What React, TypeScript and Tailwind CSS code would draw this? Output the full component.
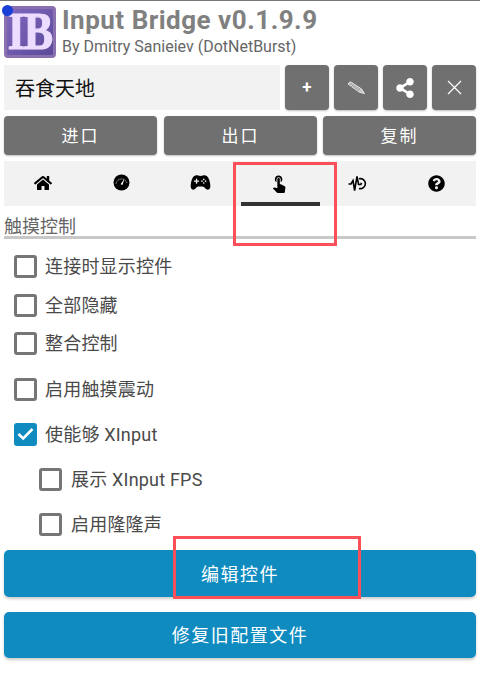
import { FaHome, FaQuestionCircle, FaShareAlt } from "react-icons/fa";
import { IoGameController } from "react-icons/io5";
import { MdTouchApp } from "react-icons/md";

const Gauge = () => (
  <svg width="17" height="17" viewBox="0 0 17 17">
    <circle cx="8.5" cy="8.5" r="8" fill="#000" />
    <path d="M3 9.5a5.6 5.6 0 0 1 11 0" fill="none" stroke="#fff" strokeWidth="1" strokeDasharray="1 1.2" />
    <path d="M7.6 10.2 11.6 4.6 9.4 11z" fill="#fff" />
  </svg>
);

const Pulse = () => (
  <svg width="19" height="19" viewBox="0 0 19 19" fill="none" stroke="#000" strokeWidth="1.6">
    <path d="M0.5 10h2.5l2-3.5 1.6 10 2.4-14 1.6 8h3" />
    <path d="M11 4.8a5 5 0 1 1 0 9.6" />
    <path d="M12.4 8.4l2.2 1.2-2.2 1.2z" fill="#000" stroke="none" />
  </svg>
);

const Pencil = () => (
  <svg width="18" height="13" viewBox="0 0 18 13" fill="#c4c4c4" stroke="#e6e6e6" strokeWidth="1">
    <path d="M1 3 3.4 0.8 14.6 8 17.5 12.6 12.4 11.2z" />
    <path d="M2.4 4.2 4.8 2M4.4 5.6l2.4-2.2M6.4 7l2.4-2.2M8.4 8.4l2.4-2.2M10.4 9.8l2.4-2.2" fill="none" stroke="#8f8f8f" />
  </svg>
);

function Logo() {
  return (
    <div className="ml-1 flex h-[52px] w-[52px] shrink-0 items-center justify-center rounded-[4px] border-[3px] border-[#8a70ae] bg-gradient-to-br from-[#8069c0] to-[#5d4a9a]">
      <span className="scale-y-[1.2] text-[44px] leading-[46px] font-bold tracking-[-1px] text-[#ecdcff] [-webkit-text-stroke:1px_#ecdcff] font-['Liberation_Serif',serif]">
        IB
      </span>
    </div>
  );
}

function GrayButton({ children, className }: { children: React.ReactNode; className: string }) {
  return (
    <button className={`flex items-center justify-center rounded-[4px] bg-[#707070] text-white shadow-[0_1px_2px_rgba(0,0,0,0.25)] ${className}`}>
      {children}
    </button>
  );
}

function Check({ label, checked, nested, className }: { label: string; checked?: boolean; nested?: boolean; className?: string }) {
  return (
    <label className={`flex h-[24px] items-center ${nested ? "gap-[9px] pl-[39px]" : "gap-[8px] pl-[14px]"} ${className ?? ""}`}>
      {checked ? (
        <span className="flex h-[23px] w-[23px] items-center justify-center rounded-[3px] bg-[#0f8bbf]">
          <svg width="17" height="14" viewBox="0 0 17 14" fill="none" stroke="#fff" strokeWidth="2.6">
            <path d="M1.5 7 6.2 11.5 15.5 2" />
          </svg>
        </span>
      ) : (
        <span className="h-[23px] w-[23px] rounded-[3px] border-[3px] border-[#767676] bg-white" />
      )}
      <span className="pt-[1px] text-[18px] leading-6 tracking-[0.2px] text-[#4a4a4a]">{label}</span>
    </label>
  );
}

export default function App() {
  return (
    <div className="relative h-[686px] w-[480px] overflow-hidden border-t border-[#777] bg-white font-['Roboto','Noto_Sans_CJK_SC',sans-serif]">
      {/* header */}
      <div className="flex h-[64px] items-start pt-[5px]">
        <Logo />
        <div className="ml-[6px]">
          <div className="text-[26px] leading-[28px] font-bold tracking-[0.5px] text-[#808080]">Input Bridge v0.1.9.9</div>
          <div className="mt-[3px] text-[16px] leading-[19px] text-[#666]">By Dmitry Sanieiev (DotNetBurst)</div>
        </div>
      </div>

      <div className="flex h-[45px] px-1">
        <div className="flex w-[276px] items-center bg-[#f2f2f2] pt-[3px] pl-[11px] text-[20px] text-[#111]">吞食天地</div>
        <GrayButton className="ml-[5px] w-[44px] text-[17px] font-bold">+</GrayButton>
        <GrayButton className="ml-[5px] w-[44px]"><Pencil /></GrayButton>
        <GrayButton className="ml-[5px] w-[44px]"><FaShareAlt size={20} /></GrayButton>
        <GrayButton className="ml-[5px] w-[44px]">
          <svg width="15" height="15" viewBox="0 0 15 15" stroke="#fff" strokeWidth="1.2"><path d="M1 1l13 13M14 1 1 14" /></svg>
        </GrayButton>
      </div>

      <div className="mt-[6px] flex h-[39px] px-1 text-[17px]">
        <GrayButton className="w-[153px] pt-[3px] tracking-[2px]">进口</GrayButton>
        <GrayButton className="ml-[7px] w-[153px] pt-[3px] tracking-[2px]">出口</GrayButton>
        <GrayButton className="ml-[6px] w-[153px] pt-[3px] tracking-[2px]">复制</GrayButton>
      </div>

      {/* tabs */}
      <div className="mx-1 mt-[6px] grid h-[45px] grid-cols-6 bg-[#f2f2f2] text-black">
        <div className="flex items-center justify-center pb-[1px]"><FaHome size={18} /></div>
        <div className="flex items-center justify-center pb-[2px]"><Gauge /></div>
        <div className="flex items-center justify-center pb-[2px]"><IoGameController size={21} /></div>
        <div className="relative flex items-start justify-center pt-[12px]">
          <MdTouchApp size={20} />
          <span className="absolute bottom-0 left-[1px] h-[4px] w-[79px] bg-[#333]" />
        </div>
        <div className="flex items-center justify-center pb-[1px]"><Pulse /></div>
        <div className="flex items-center justify-center pb-[1px]"><FaQuestionCircle size={17} /></div>
      </div>

      <div className="mx-1 mt-[9px] h-[24px] border-b-[3px] border-[#c8c8c8] pt-[2px] text-[18px] leading-[19px] text-[#666]">触摸控制</div>

      <div className="mt-[15px]">
        <Check label="连接时显示控件" />
        <Check label="全部隐藏" className="mt-[15px]" />
        <Check label="整合控制" className="mt-[14px]" />
        <Check label="启用触摸震动" className="mt-[22px]" />
        <Check label="使能够 XInput" checked className="mt-[21px]" />
        <Check label="展示 XInput FPS" nested className="mt-[21px]" />
        <Check label="启用隆隆声" nested className="mt-[21px]" />
      </div>

      <div className="mt-[14px] flex flex-col gap-[15px] px-1 text-[18px] text-white">
        <button className="flex h-[47px] items-center justify-center rounded-[5px] bg-[#0f8bbf] pt-[2px] tracking-[1.5px] shadow-[0_2px_3px_rgba(0,0,0,0.2)]">编辑控件</button>
        <button className="flex h-[46px] items-center justify-center rounded-[5px] bg-[#0f8bbf] tracking-[1.5px] shadow-[0_2px_3px_rgba(0,0,0,0.2)]">修复旧配置文件</button>
      </div>

      {/* annotations over the screenshot */}
      <span className="absolute top-[4px] left-[2px] h-[11px] w-[11px] rounded-full bg-[#1a3fd8]" />
      <span className="absolute top-[161px] left-[233px] h-[84px] w-[104px] border-[3px] border-[#fb5058]" />
      <span className="absolute top-[535px] left-[173px] h-[63px] w-[188px] border-[3px] border-[#fb5058]" />
    </div>
  );
}
